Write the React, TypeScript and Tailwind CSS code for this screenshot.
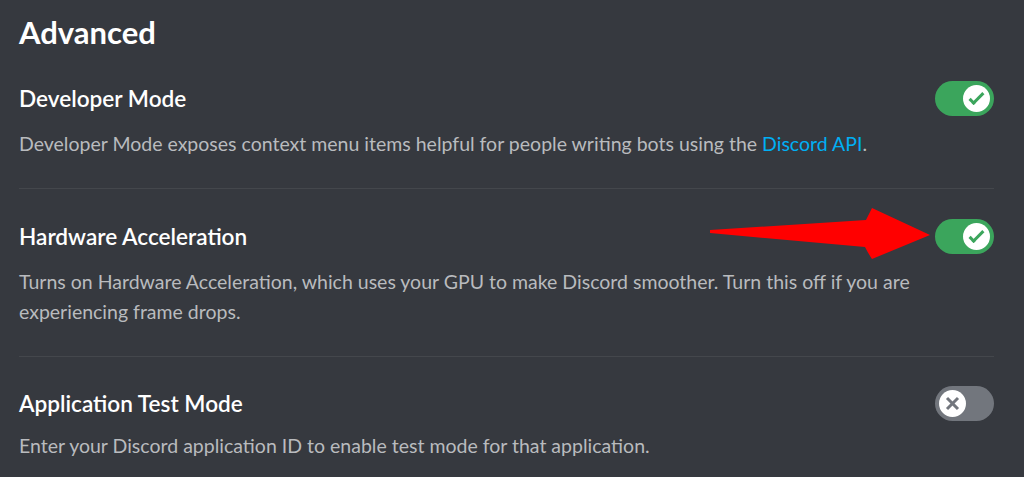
const CheckIcon = () => (
  <svg width="27" height="27" viewBox="0 0 20 20" fill="none">
    <path d="M7.89561 14.8538L6.30462 13.2629L14.3099 5.25755L15.9009 6.84854L7.89561 14.8538Z" fill="#3ba55c" />
    <path d="M4.08643 11.0903L5.67742 9.49929L9.4485 13.2704L7.85751 14.8614L4.08643 11.0903Z" fill="#3ba55c" />
  </svg>
);

const CrossIcon = () => (
  <svg width="27" height="27" viewBox="0 0 20 20" fill="none">
    <path d="M5.13231 6.72963L6.7233 5.13864L14.855 13.2704L13.264 14.8614L5.13231 6.72963Z" fill="#72767d" />
    <path d="M13.2704 5.13864L14.8614 6.72963L6.72963 14.8614L5.13864 13.2704L13.2704 5.13864Z" fill="#72767d" />
  </svg>
);

const Toggle = ({ on }: { on: boolean }) => (
  <div
    className={
      on
        ? 'flex h-[35px] w-[59px] flex-none items-center justify-end rounded-full bg-[#3ba55c] px-[4px]'
        : 'flex h-[35px] w-[59px] flex-none items-center justify-start rounded-full bg-[#72767d] px-[4px]'
    }
  >
    <div className="flex h-[27px] w-[27px] items-center justify-center rounded-full bg-white">
      {on ? <CheckIcon /> : <CrossIcon />}
    </div>
  </div>
);

const SettingRow = ({
  title,
  on,
  children,
  last,
}: {
  title: string;
  on: boolean;
  children: React.ReactNode;
  last?: boolean;
}) => (
  <div className={last ? 'pt-[29px]' : 'border-b border-[#44474c] pb-[29px] pt-[30px] first:pt-0'}>
    <div className="flex h-[35px] items-center justify-between">
      <h3 className="text-[22.6px] font-semibold leading-[28px] text-white">{title}</h3>
      <Toggle on={on} />
    </div>
    <p className={last ? 'mt-[10px] text-[19.5px] leading-[30px] text-[#b9bbbe]' : 'mt-[13px] text-[19.5px] leading-[30px] text-[#b9bbbe]'}>
      {children}
    </p>
  </div>
);

export default function App() {
  return (
    <div
      className="relative h-[477px] w-full overflow-hidden bg-[#36393f] pl-[19px] pr-[30px] pt-[14px]"
      style={{ fontFamily: 'Lato, "Noto Sans", sans-serif' }}
    >
      <h2 className="text-[31px] font-bold leading-[36px] text-white">Advanced</h2>
      <div className="mt-[31px]">
        <SettingRow title="Developer Mode" on>
          Developer Mode exposes context menu items helpful for people writing bots using the{' '}
          <a className="text-[#00aff4]">Discord API</a>.
        </SettingRow>
        <SettingRow title="Hardware Acceleration" on>
          Turns on Hardware Acceleration, which uses your GPU to make Discord smoother. Turn this off if you are
          experiencing frame drops.
        </SettingRow>
        <SettingRow title="Application Test Mode" on={false} last>
          Enter your Discord application ID to enable test mode for that application.
        </SettingRow>
      </div>

      {/* red annotation arrow */}
      <svg className="absolute left-0 top-0" width="1024" height="477" viewBox="0 0 1024 477">
        <path
          d="M710 230 L866 220 Q869 214 872 208 L930 235 L872 259 Q868 253 865 247 L710 233 Z"
          fill="#ff0000"
        />
      </svg>
    </div>
  );
}
